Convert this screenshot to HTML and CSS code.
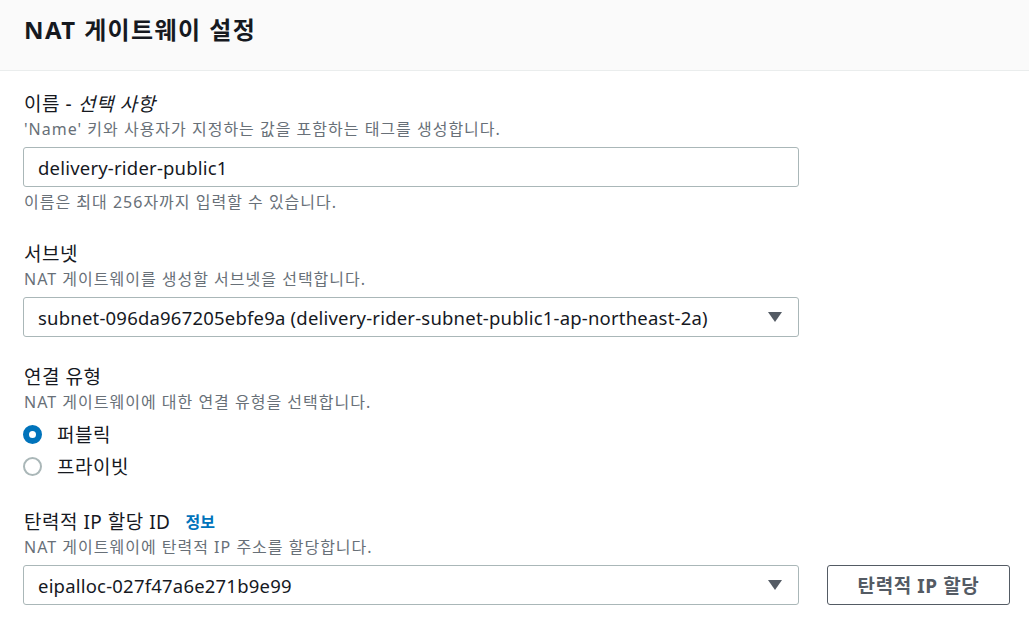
FILE: index.html
```html
<!DOCTYPE html>
<html lang="ko">
<head>
<meta charset="utf-8">
<link rel="stylesheet" href="styles.css">
</head>
<body>
<div class="panel">
  <div class="header"><h2 class="title">NAT 게이트웨이 설정</h2></div>
  <div class="body">
    <div class="field">
      <div class="label">이름 - <i>선택 사항</i></div>
      <div class="desc">'Name' 키와 사용자가 지정하는 값을 포함하는 태그를 생성합니다.</div>
      <div class="control"><div class="input">delivery-rider-public1</div></div>
      <div class="hint">이름은 최대 256자까지 입력할 수 있습니다.</div>
    </div>
    <div class="field">
      <div class="label">서브넷</div>
      <div class="desc">NAT 게이트웨이를 생성할 서브넷을 선택합니다.</div>
      <div class="control"><div class="input select">subnet-096da967205ebfe9a (delivery-rider-subnet-public1-ap-northeast-2a)<span class="caret"></span></div></div>
    </div>
    <div class="field">
      <div class="label">연결 유형</div>
      <div class="desc">NAT 게이트웨이에 대한 연결 유형을 선택합니다.</div>
      <div class="radios">
        <div class="radio"><span class="dot on"></span>퍼블릭</div>
        <div class="radio"><span class="dot"></span>프라이빗</div>
      </div>
    </div>
    <div class="field">
      <div class="label">탄력적 IP 할당 ID <a class="info">정보</a></div>
      <div class="desc">NAT 게이트웨이에 탄력적 IP 주소를 할당합니다.</div>
      <div class="control row">
        <div class="input select">eipalloc-027f47a6e271b9e99<span class="caret"></span></div>
        <div class="button">탄력적 IP 할당</div>
      </div>
    </div>
  </div>
</div>
</body>
</html>
```
FILE: styles.css
```css
html, body {
  margin: 0;
  padding: 0;
  background: #ffffff;
}
body {
  font-family: "Noto Sans", "Noto Sans CJK KR", sans-serif;
  color: #16191f;
}
.header {
  height: 71px;
  background: #fafafa;
  border-bottom: 1px solid #eaeded;
  box-sizing: border-box;
  padding: 14px 24px 0;
}
.title {
  margin: 0;
  font-size: 24px;
  line-height: 32px;
  font-weight: 700;
  letter-spacing: 1.4px;
  color: #16191f;
}
.body {
  padding: 20px 18px 0 23px;
  display: flex;
  flex-direction: column;
  gap: 27px;
}
.field {
  display: flex;
  flex-direction: column;
}
.label {
  font-size: 19px;
  line-height: 26px;
  letter-spacing: 0.5px;
  padding-left: 1px;
  display: flex;
  align-items: center;
}
.label i {
  font-style: italic;
  margin-left: 6px;
}
.info {
  color: #0073bb;
  font-size: 16px;
  font-weight: 700;
  margin-left: 15px;
  letter-spacing: 0;
}
.desc, .hint {
  font-size: 16px;
  line-height: 24px;
  letter-spacing: 1px;
  color: #687078;
  padding-left: 1px;
}
.hint {
  margin-top: 3px;
}
.control {
  margin-top: 6px;
}
.row {
  display: flex;
  gap: 28px;
  align-items: center;
}
.input {
  width: 776px;
  flex-shrink: 0;
  height: 40px;
  box-sizing: border-box;
  border: 1px solid #aab7b8;
  border-radius: 3px;
  padding: 0 14px;
  font-size: 18.5px;
  letter-spacing: 0.2px;
  display: flex;
  align-items: center;
  position: relative;
  color: #16191f;
}
.caret {
  position: absolute;
  right: 16px;
  top: 14px;
  width: 0;
  height: 0;
  border-left: 7px solid transparent;
  border-right: 7px solid transparent;
  border-top: 10px solid #545b64;
}
.button {
  width: 183px;
  flex-shrink: 0;
  height: 40px;
  box-sizing: border-box;
  border: 1px solid #545b64;
  border-radius: 3px;
  display: flex;
  align-items: center;
  justify-content: center;
  font-size: 19px;
  letter-spacing: 0.6px;
  font-weight: 700;
  color: #545b64;
}
.radios {
  display: flex;
  flex-direction: column;
  margin-top: 4px;
}
.radio {
  display: flex;
  align-items: center;
  height: 32px;
  font-size: 19px;
  letter-spacing: 0.5px;
}
.dot {
  width: 19px;
  height: 19px;
  box-sizing: border-box;
  border-radius: 50%;
  border: 2px solid #aab7b8;
  margin-right: 15px;
}
.dot.on {
  border: 6px solid #0073bb;
}
```
